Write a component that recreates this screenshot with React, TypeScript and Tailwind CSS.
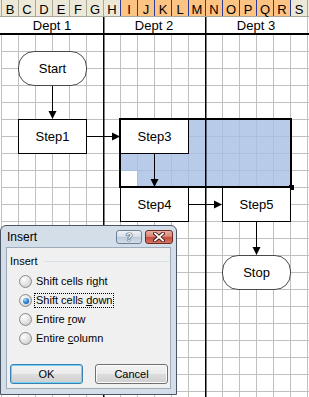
import React from 'react';

const columns = ['B', 'C', 'D', 'E', 'F', 'G', 'H', 'I', 'J', 'K', 'L', 'M', 'N', 'O', 'P', 'Q', 'R', 'S', 'T'];
const selectedCols = ['I', 'J', 'K', 'L', 'M', 'N', 'O', 'P', 'Q', 'R'];
const rowCount = 22;

const shapes = [
  { label: 'Start', pos: 'left-[18px] top-[51px]', terminator: true },
  { label: 'Step1', pos: 'left-[18px] top-[119px]' },
  { label: 'Step3', pos: 'left-[120px] top-[119px]' },
  { label: 'Step4', pos: 'left-[120px] top-[187px]' },
  { label: 'Step5', pos: 'left-[222px] top-[187px]' },
  { label: 'Stop', pos: 'left-[222px] top-[255px]', terminator: true },
];

const options = [
  { before: 'Shift cells ri', key: 'g', after: 'ht' },
  { before: 'Shift cells ', key: 'd', after: 'own', checked: true },
  { before: 'Entire ', key: 'r', after: 'ow' },
  { before: 'Entire ', key: 'c', after: 'olumn' },
];

function Radio({ checked }: { checked?: boolean }) {
  return (
    <div className="w-[13px] h-[13px] shrink-0 rounded-full border border-[#8a8a8a] bg-[radial-gradient(circle_at_35%_30%,#ffffff_0%,#e6e6e6_45%,#c4c4c4_100%)] flex items-center justify-center">
      {checked && (
        <div className="w-[6px] h-[6px] rounded-full bg-[radial-gradient(circle_at_35%_30%,#9fdcff_0%,#2c86d4_50%,#0b4a8c_100%)]" />
      )}
    </div>
  );
}

function InsertDialog() {
  return (
    <div className="absolute left-0 top-[225px] w-[177px] h-[170px] rounded-t-[6px] border border-[#4a5666] bg-[#d3dee9] flex flex-col font-['Liberation_Sans',Arial,sans-serif] text-[11px] text-black">
      {/* title bar */}
      <div className="h-[21px] flex items-center pl-[6px] pr-[3px]">
        <span className="text-[12px]">Insert</span>
        <div className="ml-auto self-start mt-[4px] flex gap-[3px]">
          <div className="w-[26px] h-[14px] rounded-[3px] border border-[#6f7f95] bg-[linear-gradient(to_bottom,#eef2f7_0%,#d3dce8_50%,#bccadb_50%,#d2dde9_100%)] flex items-center justify-center">
            <span className="text-white font-bold text-[11px] leading-none [text-shadow:0_0_1px_#1e2a3a,0_0_1px_#1e2a3a,0_0_1px_#1e2a3a]">?</span>
          </div>
          <div className="w-[28px] h-[14px] rounded-[3px] border border-[#6b2a22] bg-[linear-gradient(to_bottom,#eab0a4_0%,#d6806f_50%,#c24a3c_50%,#d77363_100%)] flex items-center justify-center">
            <svg width="12" height="10" viewBox="0 0 12 10">
              <path d="M2 1.5 L10 8.5 M10 1.5 L2 8.5" stroke="#3b1510" strokeWidth="3.6" strokeLinecap="square" />
              <path d="M2 1.5 L10 8.5 M10 1.5 L2 8.5" stroke="#ffffff" strokeWidth="1.8" strokeLinecap="square" />
            </svg>
          </div>
        </div>
      </div>

      {/* body */}
      <div className="flex-1 mx-[5px] mb-[5px] border border-[#9eabba] bg-[#f0f0f0] flex flex-col">
        <div className="mt-[6px] ml-[3px] mr-[1px] h-[14px] flex items-center gap-[6px]">
          <span>Insert</span>
          <div className="flex-1 h-px bg-[#d5dfe5]" />
        </div>

        <div className="mt-[4px] pl-[12px] flex flex-col">
          {options.map((o) => (
            <div key={o.before + o.key} className="h-[19px] flex items-center gap-[2px]">
              <Radio checked={o.checked} />
              <span
                className={`px-[1px] leading-[13px] border ${
                  o.checked ? 'border-dotted border-black' : 'border-transparent'
                }`}
              >
                {o.before}
                <u>{o.key}</u>
                {o.after}
              </span>
            </div>
          ))}
        </div>

        <div className="mt-[16px] pl-[3px] flex gap-[12px]">
          <button className="w-[73px] h-[20px] rounded-[3px] border border-[#3c7fb1] shadow-[inset_0_0_0_1px_#6fd3f7] bg-[linear-gradient(to_bottom,#f3f3f3_0%,#ebebeb_50%,#dddddd_50%,#cfcfcf_100%)] flex items-center justify-center">
            OK
          </button>
          <button className="w-[73px] h-[20px] rounded-[3px] border border-[#707070] shadow-[inset_0_0_0_1px_#fbfbfb] bg-[linear-gradient(to_bottom,#f3f3f3_0%,#ebebeb_50%,#dddddd_50%,#cfcfcf_100%)] flex items-center justify-center">
            Cancel
          </button>
        </div>
      </div>
    </div>
  );
}

export default function App() {
  return (
    <div className="relative w-[309px] h-[397px] overflow-hidden bg-white font-['Liberation_Sans',Arial,sans-serif] text-black">
      {/* column headers (T is only a sliver at the window edge) */}
      <div className="flex h-[17px] pl-px bg-[#ece9d8] border-b border-[#aca899]">
        {columns.map((c, i) => {
          const sel = selectedCols.includes(c);
          const blueEdge = sel || selectedCols.includes(columns[i - 1]);
          return (
            <div
              key={c}
              className={`w-[17px] h-[16px] shrink-0 border-l text-center text-[13px] leading-[14px] pt-[3px] ${
                blueEdge ? 'border-[#2d3c9b]' : 'border-[#aca899]'
              } ${sel ? 'bg-[#fdc383]' : ''}`}
            >
              {c === 'T' ? '' : c}
            </div>
          );
        })}
      </div>

      {/* department row */}
      <div className="flex h-[18px] pl-px border-b-2 border-black text-[13px] leading-[14px]">
        <div className="w-[102px] shrink-0 text-center pt-[2px]">Dept 1</div>
        <div className="w-[102px] shrink-0 text-center pt-[2px]">Dept 2</div>
        <div className="w-[102px] shrink-0 text-center pt-[2px]">Dept 3</div>
        <div className="flex-1 border-l border-[#c0c0c0]" />
      </div>

      {/* cell grid */}
      {Array.from({ length: rowCount }).map((_, r) => (
        <div key={r} className="flex h-[17px] pl-px">
          {columns.map((c) => (
            <div key={c} className="w-[17px] h-[17px] shrink-0 border-l border-b border-[#c0c0c0]" />
          ))}
        </div>
      ))}

      {/* selection I7:R10 */}
      <div className="absolute left-[119px] top-[118px] w-[173px] h-[70px] border-2 border-black bg-[rgba(166,190,226,0.8)]">
        <div className="absolute left-0 bottom-0 w-[16px] h-[15px] bg-white" />
        <div className="absolute right-[-4px] bottom-[-4px] w-[5px] h-[5px] bg-black" />
      </div>

      {/* department dividers and connectors */}
      <svg className="absolute left-0 top-0" width="309" height="397" viewBox="0 0 309 397">
        <rect x="103" y="17" width="1.5" height="380" fill="#000" />
        <rect x="205" y="17" width="1.5" height="380" fill="#000" />

        <g stroke="#000" strokeWidth="1">
          <line x1="52.5" y1="86" x2="52.5" y2="112" />
          <line x1="87" y1="136.5" x2="113" y2="136.5" />
          <line x1="154.5" y1="154" x2="154.5" y2="180" />
          <line x1="189" y1="204.5" x2="215" y2="204.5" />
          <line x1="256.5" y1="222" x2="256.5" y2="248" />
        </g>
        <g fill="#000">
          <polygon points="48.5,111 56.5,111 52.5,119" />
          <polygon points="112,132.5 112,140.5 120,136.5" />
          <polygon points="150.5,179 158.5,179 154.5,187" />
          <polygon points="214,200.5 214,208.5 222,204.5" />
          <polygon points="252.5,247 260.5,247 256.5,255" />
        </g>
      </svg>

      {/* flowchart shapes */}
      {shapes.map((s) => (
        <div
          key={s.label}
          className={`absolute ${s.pos} w-[69px] h-[35px] bg-white flex items-center justify-center text-[13px] ${
            s.terminator ? 'rounded-[16px] border border-[#4a4a4a]' : 'border border-black'
          }`}
        >
          {s.label}
        </div>
      ))}

      <InsertDialog />
    </div>
  );
}
